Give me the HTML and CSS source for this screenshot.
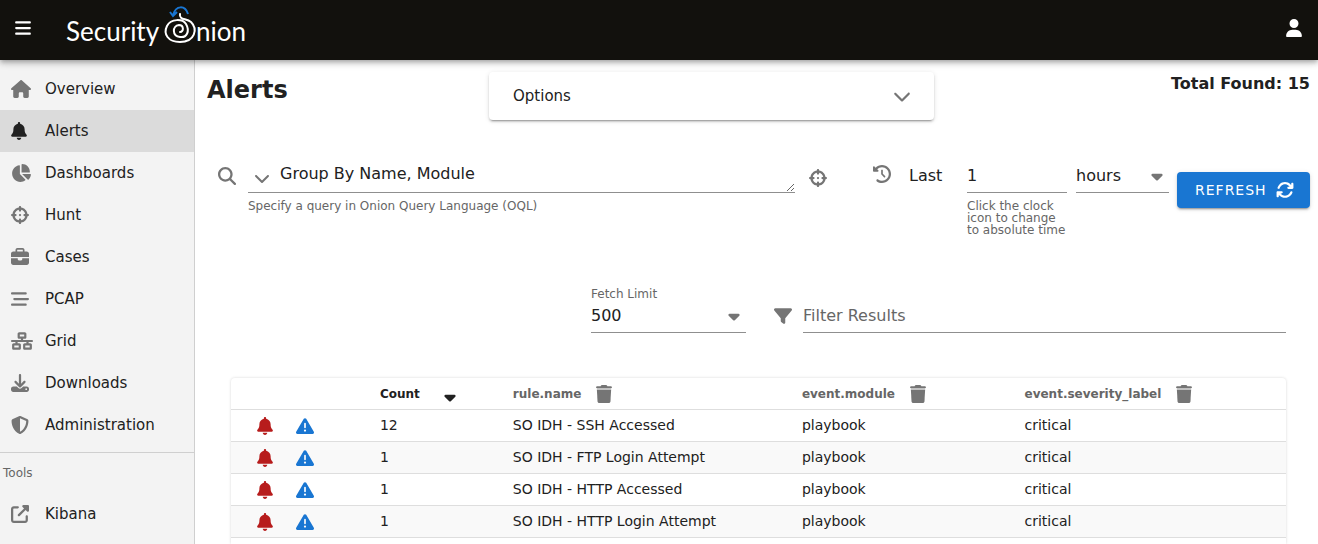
FILE: index.html
```html
<!DOCTYPE html>
<html lang="en">
<head>
<meta charset="utf-8">
<meta name="viewport" content="width=device-width, initial-scale=1">
<title>Security Onion - Alerts</title>
<link rel="stylesheet" href="styles.css">
</head>
<body>
<svg class="sprite" aria-hidden="true">
  <symbol id="i-bars" viewBox="0 0 448 512"><path d="M0 96C0 78.300 14.300 64 32 64H416c17.700 0 32 14.300 32 32s-14.300 32-32 32H32C14.300 128 0 113.700 0 96zM0 256c0-17.700 14.300-32 32-32H416c17.700 0 32 14.300 32 32s-14.300 32-32 32H32c-17.700 0-32-14.300-32-32zM448 416c0 17.700-14.300 32-32 32H32c-17.700 0-32-14.300-32-32s14.300-32 32-32H416c17.700 0 32 14.300 32 32z"/></symbol>
  <symbol id="i-user" viewBox="0 0 448 512"><path d="M224 256A128 128 0 1 0 224 0a128 128 0 1 0 0 256zm-45.700 48C79.800 304 0 383.800 0 482.300C0 498.700 13.300 512 29.700 512H418.300c16.400 0 29.700-13.300 29.700-29.700C448 383.800 368.200 304 269.700 304H178.300z"/></symbol>
  <symbol id="i-house" viewBox="0 0 576 512"><path d="M575.8 255.5c0 18-15 32.1-32 32.1h-32l.7 160.2c0 2.7-.2 5.4-.5 8.1V472c0 22.1-17.9 40-40 40H456c-1.1 0-2.2 0-3.3-.1c-1.4 .1-2.8 .1-4.2 .1H416 392c-22.1 0-40-17.9-40-40V448 384c0-17.7-14.3-32-32-32H256c-17.7 0-32 14.3-32 32v64 24c0 22.1-17.9 40-40 40H160 128.1c-1.5 0-3-.1-4.5-.2c-1.2 .1-2.4 .2-3.6 .2H104c-22.1 0-40-17.9-40-40V360c0-.9 0-1.9 .1-2.8V287.6H32c-18 0-32-14-32-32.100c0-9 3-17 10-24L266.4 8c7-7 15-8 22-8s15 2 21 7L564.8 231.5c8 7 12 15 11 24z"/></symbol>
  <symbol id="i-bell" viewBox="0 0 448 512"><path d="M224 0c-17.7 0-32 14.3-32 32V51.2C119 66 64 130.6 64 208v18.8c0 47-17.3 92.4-48.5 127.6l-7.4 8.3c-8.4 9.4-10.4 22.9-5.3 34.4S19.4 416 32 416H416c12.6 0 24-7.4 29.2-18.9s3.1-25-5.3-34.4l-7.4-8.3C401.3 319.2 384 273.9 384 226.8V208c0-77.4-55-142-128-156.8V32c0-17.7-14.3-32-32-32zm45.3 493.3c12-12 18.7-28.3 18.7-45.3H224 160c0 17 6.7 33.3 18.7 45.3s28.3 18.7 45.3 18.7s33.3-6.7 45.3-18.7z"/></symbol>
  <symbol id="i-pie" viewBox="0 0 576 512"><path d="M304 240V16.6c0-9 7-16.6 16-16.6C443.7 0 544 100.3 544 224c0 9-7.6 16-16.6 16H304zM32 272C32 150.7 122.1 50.3 239 34.3c9.2-1.3 17 6.1 17 15.4V288L412.5 444.5c6.7 6.7 6.2 17.7-1.5 23.1C371.8 495.6 323.8 512 272 512C139.5 512 32 404.6 32 272zm526.4 16c9.3 0 16.6 7.8 15.4 17c-7.7 55.9-34.6 105.6-73.9 142.3c-6 5.6-15.4 5.2-21.2-.7L320 288H558.4z"/></symbol>
  <symbol id="i-crosshairs" viewBox="0 0 512 512"><path d="M256 0c17.7 0 32 14.3 32 32V42.4c93.7 13.9 167.7 88 181.6 181.6H480c17.7 0 32 14.3 32 32s-14.3 32-32 32H469.6c-13.9 93.7-88 167.7-181.6 181.6V480c0 17.7-14.3 32-32 32s-32-14.3-32-32V469.6C130.3 455.7 56.3 381.7 42.4 288H32c-17.7 0-32-14.3-32-32s14.3-32 32-32H42.4C56.3 130.3 130.3 56.3 224 42.4V32c0-17.7 14.3-32 32-32zM107.4 288c12.5 58.3 58.4 104.1 116.6 116.6V384c0-17.7 14.3-32 32-32s32 14.3 32 32v20.6c58.3-12.5 104.1-58.4 116.6-116.6H384c-17.7 0-32-14.3-32-32s14.3-32 32-32h20.6C392.1 165.7 346.3 119.900 288 107.4V128c0 17.7-14.3 32-32 32s-32-14.3-32-32V107.4C165.7 119.9 119.9 165.7 107.4 224H128c17.7 0 32 14.3 32 32s-14.3 32-32 32H107.4zM256 224a32 32 0 1 1 0 64 32 32 0 1 1 0-64z"/></symbol>
  <symbol id="i-briefcase" viewBox="0 0 512 512"><path d="M184 48H328c4.4 0 8 3.6 8 8V96H176V56c0-4.4 3.600-8 8-8zm-56 8V96H64C28.7 96 0 124.7 0 160v96H192 320 512V160c0-35.3-28.7-64-64-64H384V56c0-30.9-25.1-56-56-56H184c-30.9 0-56 25.1-56 56zM512 288H320v32c0 17.7-14.3 32-32 32H224c-17.7 0-32-14.3-32-32V288H0V416c0 35.3 28.7 64 64 64H448c35.3 0 64-28.7 64-64V288z"/></symbol>
  <symbol id="i-staggered" viewBox="0 0 512 512"><path d="M0 96C0 78.3 14.3 64 32 64H416c17.7 0 32 14.3 32 32s-14.3 32-32 32H32C14.3 128 0 113.7 0 96zM64 256c0-17.7 14.3-32 32-32H480c17.7 0 32 14.3 32 32s-14.3 32-32 32H96c-17.7 0-32-14.3-32-32zM448 416c0 17.7-14.3 32-32 32H32c-17.7 0-32-14.3-32-32s14.3-32 32-32H416c17.7 0 32 14.3 32 32z"/></symbol>
  <symbol id="i-network" viewBox="0 0 640 512"><path d="M256 64H384v64H256V64zM240 0c-26.5 0-48 21.5-48 48v96c0 26.5 21.5 48 48 48h48v32H32c-17.7 0-32 14.3-32 32s14.3 32 32 32h96v32H80c-26.5 0-48 21.5-48 48v96c0 26.5 21.5 48 48 48H240c26.5 0 48-21.5 48-48V368c0-26.5-21.5-48-48-48H192V288H448v32H400c-26.5 0-48 21.5-48 48v96c0 26.5 21.5 48 48 48H560c26.5 0 48-21.5 48-48V368c0-26.5-21.5-48-48-48H512V288h96c17.7 0 32-14.3 32-32s-14.3-32-32-32H352V192h48c26.5 0 48-21.5 48-48V48c0-26.5-21.5-48-48-48H240zM96 448V384H224v64H96zm320-64H544v64H416V384z"/></symbol>
  <symbol id="i-download" viewBox="0 0 512 512"><path d="M288 32c0-17.7-14.3-32-32-32s-32 14.3-32 32V274.7l-73.4-73.4c-12.5-12.5-32.8-12.5-45.3 0s-12.5 32.8 0 45.3l128 128c12.5 12.5 32.8 12.5 45.3 0l128-128c12.5-12.5 12.5-32.8 0-45.3s-32.8-12.5-45.3 0L288 274.7V32zM64 352c-35.3 0-64 28.7-64 64v32c0 35.3 28.7 64 64 64H448c35.3 0 64-28.7 64-64V416c0-35.3-28.7-64-64-64H346.5l-45.3 45.3c-25 25-65.5 25-90.5 0L165.5 352H64zm368 56a24 24 0 1 1 0 48 24 24 0 1 1 0-48z"/></symbol>
  <symbol id="i-shield" viewBox="0 0 512 512"><path d="M256 0c4.6 0 9.2 1 13.4 2.9L457.7 82.8c22 9.3 38.4 31 38.3 57.2c-.5 99.2-41.3 280.7-213.6 363.2c-16.7 8-36.1 8-52.8 0C57.3 420.7 16.5 239.2 16 140c-.1-26.2 16.3-47.9 38.3-57.2L242.7 2.9C246.8 1 251.4 0 256 0zm0 66.8V444.8C394 378 431.1 230.1 432 141.4L256 66.8z"/></symbol>
  <symbol id="i-external" viewBox="0 0 512 512"><path d="M352 0c-12.9 0-24.6 7.8-29.6 19.8s-2.2 25.7 6.9 34.9L370.7 96 201.4 265.4c-12.5 12.5-12.5 32.8 0 45.3s32.8 12.5 45.3 0L416 141.3l41.4 41.4c9.2 9.2 22.9 11.9 34.9 6.9s19.8-16.6 19.8-29.6V32c0-17.7-14.3-32-32-32H352zM80 32C35.8 32 0 67.8 0 112V432c0 44.2 35.8 80 80 80H400c44.2 0 80-35.8 80-80V320c0-17.7-14.3-32-32-32s-32 14.3-32 32V432c0 8.800-7.2 16-16 16H80c-8.8 0-16-7.2-16-16V112c0-8.8 7.2-16 16-16H192c17.7 0 32-14.3 32-32s-14.3-32-32-32H80z"/></symbol>
  <symbol id="i-search" viewBox="0 0 512 512"><path d="M416 208c0 45.9-14.9 88.3-40 122.7L502.6 457.4c12.5 12.5 12.5 32.8 0 45.3s-32.8 12.5-45.3 0L330.7 376c-34.4 25.2-76.8 40-122.7 40C93.1 416 0 322.9 0 208S93.1 0 208 0S416 93.1 416 208zM208 352a144 144 0 1 0 0-288 144 144 0 1 0 0 288z"/></symbol>
  <symbol id="i-chevron" viewBox="0 0 512 512"><path d="M233.4 406.6c12.5 12.5 32.8 12.5 45.3 0l192-192c12.5-12.5 12.5-32.8 0-45.3s-32.8-12.5-45.3 0L256 338.7 86.6 169.4c-12.5-12.5-32.8-12.5-45.3 0s-12.5 32.8 0 45.3l192 192z"/></symbol>
  <symbol id="i-history" viewBox="0 0 512 512"><path d="M75 75L41 41C25.9 25.9 0 36.6 0 57.9V168c0 13.3 10.7 24 24 24H134.1c21.4 0 32.1-25.9 17-41l-30.8-30.8C155 85.5 203 64 256 64c106 0 192 86 192 192s-86 192-192 192c-40.8 0-78.6-12.7-109.7-34.4c-14.5-10.1-34.4-6.6-44.6 7.9s-6.6 34.4 7.9 44.6C151.2 495 201.7 512 256 512c141.4 0 256-114.6 256-256S397.4 0 256 0C185.3 0 121.3 28.7 75 75zm181 53c-13.3 0-24 10.7-24 24V256c0 6.4 2.5 12.5 7 17l72 72c9.4 9.4 24.6 9.4 33.9 0s9.4-24.6 0-33.9l-65-65V152c0-13.3-10.7-24-24-24z"/></symbol>
  <symbol id="i-refresh" viewBox="0 0 512 512"><path d="M105.1 202.6c7.7-21.8 20.2-42.3 37.8-59.8c62.5-62.5 163.8-62.5 226.3 0L386.3 160H352c-17.7 0-32 14.3-32 32s14.3 32 32 32H463.900c17.7 0 32-14.3 32-32V80c0-17.7-14.3-32-32-32s-32 14.3-32 32v35.2L414.4 97.6c-87.5-87.5-229.3-87.5-316.8 0C73.2 122 55.6 150.7 44.8 181.4c-5.9 16.7 2.9 34.9 19.5 40.8s34.9-2.9 40.8-19.5zM39 289.3c-5 1.5-9.8 4.2-13.7 8.2c-4 4-6.7 8.8-8.1 14c-.3 1.2-.6 2.5-.8 3.8c-.3 1.7-.4 3.4-.4 5.1V432c0 17.7 14.3 32 32 32s32-14.3 32-32V396.9l17.6 17.5c87.5 87.4 229.3 87.4 316.7 0c24.4-24.4 42.1-53.1 52.9-83.7c5.9-16.7-2.9-34.9-19.5-40.8s-34.9 2.9-40.8 19.5c-7.7 21.8-20.2 42.3-37.8 59.8c-62.5 62.5-163.8 62.5-226.3 0l-.1-.1L125.6 352H160c17.7 0 32-14.3 32-32s-14.3-32-32-32H48.4c-1.6 0-3.2 .1-4.8 .3s-3.1 .5-4.6 1z"/></symbol>
  <symbol id="i-filter" viewBox="0 0 512 512"><path d="M3.9 54.9C10.5 40.9 24.5 32 40 32H472c15.5 0 29.5 8.9 36.1 22.9s4.6 30.5-5.2 42.5L320 320.9V448c0 12.1-6.8 23.2-17.7 28.6s-23.8 4.3-33.5-3l-64-48c-8.1-6-12.8-15.5-12.8-25.6V320.9L9 97.3C-.7 85.4-2.8 68.8 3.9 54.9z"/></symbol>
  <symbol id="i-warning" viewBox="0 0 512 512"><path d="M256 32c14.2 0 27.3 7.5 34.5 19.8l216 368c7.3 12.4 7.3 27.7 .2 40.1S486.3 480 472 480H40c-14.3 0-27.6-7.7-34.7-20.1s-7-27.8 .2-40.1l216-368C228.7 39.5 241.8 32 256 32zm0 128c-13.3 0-24 10.7-24 24V296c0 13.3 10.7 24 24 24s24-10.7 24-24V184c0-13.3-10.7-24-24-24zm32 224a32 32 0 1 0 -64 0 32 32 0 1 0 64 0z"/></symbol>
  <symbol id="i-caret" viewBox="0 0 320 512"><path d="M137.4 374.6c12.5 12.5 32.8 12.5 45.3 0l128-128c9.2-9.2 11.9-22.9 6.9-34.9s-16.6-19.8-29.6-19.8L32 192c-12.9 0-24.6 7.8-29.6 19.8s-2.2 25.7 6.9 34.9l128 128z"/></symbol>
  <symbol id="i-trash" viewBox="0 0 448 512"><path d="M135 18C141 7 152 0 164 0H284c12 0 23 7 29 18L320 32H416c18 0 32 14 32 32v18H0V64C0 46 14 32 32 32H128z"/><path opacity=".45" d="M18 82H430L426 145H22z"/><path d="M22 145H426L408 467c-2 25-23 45-48 45H88c-25 0-46-20-48-45z"/></symbol>
</svg>

<header class="appbar">
  <button class="icon-button" type="button" aria-label="Toggle navigation"><svg class="icon"><use href="#i-bars"/></svg></button>
  <a class="brand" href="#" aria-label="Security Onion">
    <svg class="logo" viewBox="0 0 180 48" role="img">
      <text x="0" y="37">Security</text>
      <path class="logo-line" d="M114 10C113 16 120 14 125 18C132 25 129 38 114 38C102 38 97 30 101 22C105 14 117 15 120 20C124 27 121 34 114 33C106 32 106 22 113 21C118 21 118 28 114 28"/>
      <path class="logo-arrow" d="M122 10C119 1 110 1 107 11M104 8l3 4l4-4"/>
      <text x="130" y="37">nion</text>
    </svg>
  </a>
  <button class="icon-button user" type="button" aria-label="User menu"><svg class="icon"><use href="#i-user"/></svg></button>
</header>

<div class="shell">
  <nav class="sidebar" aria-label="Main">
    <ul class="nav-list">
      <li><a class="nav-item" href="#"><span class="nav-icon"><svg class="icon w20"><use href="#i-house"/></svg></span>Overview</a></li>
      <li><a class="nav-item active" href="#" aria-current="page"><span class="nav-icon"><svg class="icon w16"><use href="#i-bell"/></svg></span>Alerts</a></li>
      <li><a class="nav-item" href="#"><span class="nav-icon"><svg class="icon w20"><use href="#i-pie"/></svg></span>Dashboards</a></li>
      <li><a class="nav-item" href="#"><span class="nav-icon"><svg class="icon"><use href="#i-crosshairs"/></svg></span>Hunt</a></li>
      <li><a class="nav-item" href="#"><span class="nav-icon"><svg class="icon"><use href="#i-briefcase"/></svg></span>Cases</a></li>
      <li><a class="nav-item" href="#"><span class="nav-icon"><svg class="icon"><use href="#i-staggered"/></svg></span>PCAP</a></li>
      <li><a class="nav-item" href="#"><span class="nav-icon"><svg class="icon w22"><use href="#i-network"/></svg></span>Grid</a></li>
      <li><a class="nav-item" href="#"><span class="nav-icon"><svg class="icon"><use href="#i-download"/></svg></span>Downloads</a></li>
      <li><a class="nav-item" href="#"><span class="nav-icon"><svg class="icon"><use href="#i-shield"/></svg></span>Administration</a></li>
    </ul>
    <h2 class="nav-heading">Tools</h2>
    <ul class="nav-list">
      <li><a class="nav-item" href="#"><span class="nav-icon"><svg class="icon"><use href="#i-external"/></svg></span>Kibana</a></li>
    </ul>
  </nav>

  <main class="content">
    <div class="title-row">
      <h1 class="title">Alerts</h1>
      <button class="options" type="button" aria-expanded="false">Options<svg class="icon"><use href="#i-chevron"/></svg></button>
      <p class="total">Total Found: 15</p>
    </div>

    <form class="search-row">
      <span class="lead-icon"><svg class="icon"><use href="#i-search"/></svg></span>
      <div class="query">
        <div class="query-box">
          <button class="query-menu" type="button" aria-label="Saved queries"><svg class="icon small"><use href="#i-chevron"/></svg></button>
          <textarea id="query" class="query-input" rows="1" aria-label="Query" aria-describedby="query-hint">Group By Name, Module</textarea>
        </div>
        <p class="hint" id="query-hint">Specify a query in Onion Query Language (OQL)</p>
      </div>
      <button class="icon-button hunt" type="button" aria-label="Hunt with this query"><svg class="icon"><use href="#i-crosshairs"/></svg></button>
      <div class="time">
        <button class="icon-button clock" type="button" aria-label="Switch to absolute time"><svg class="icon"><use href="#i-history"/></svg></button>
        <label class="last" for="duration">Last</label>
        <div class="duration">
          <input id="duration" class="field" type="text" value="1" aria-describedby="duration-hint">
          <p class="hint" id="duration-hint">Click the clock icon to change to absolute time</p>
        </div>
        <div class="select units">
          <select class="field" aria-label="Time units"><option>hours</option></select>
          <svg class="icon caret"><use href="#i-caret"/></svg>
        </div>
        <button class="refresh" type="button">REFRESH<svg class="icon"><use href="#i-refresh"/></svg></button>
      </div>
    </form>

    <div class="filter-row">
      <div class="fetch">
        <label class="label" for="limit">Fetch Limit</label>
        <div class="select">
          <select id="limit" class="field"><option>500</option></select>
          <svg class="icon caret"><use href="#i-caret"/></svg>
        </div>
      </div>
      <div class="filter">
        <span class="lead-icon"><svg class="icon"><use href="#i-filter"/></svg></span>
        <input class="field" type="text" placeholder="Filter Results" aria-label="Filter Results">
      </div>
    </div>

    <div class="card">
      <table class="results">
        <colgroup><col class="c-actions"><col class="c-count"><col class="c-name"><col class="c-module"><col class="c-severity"></colgroup>
        <thead>
          <tr>
            <td></td>
            <th scope="col" class="sorted" aria-sort="descending"><span class="th">Count<svg class="icon caret-sort"><use href="#i-caret"/></svg></span></th>
            <th scope="col"><span class="th">rule.name<button class="icon-button" type="button" aria-label="Remove rule.name"><svg class="icon w16"><use href="#i-trash"/></svg></button></span></th>
            <th scope="col"><span class="th">event.module<button class="icon-button" type="button" aria-label="Remove event.module"><svg class="icon w16"><use href="#i-trash"/></svg></button></span></th>
            <th scope="col"><span class="th">event.severity_label<button class="icon-button" type="button" aria-label="Remove event.severity_label"><svg class="icon w16"><use href="#i-trash"/></svg></button></span></th>
          </tr>
        </thead>
        <tbody>
          <tr>
            <td class="actions"><div class="action-set"><button class="icon-button ack" type="button" aria-label="Acknowledge"><svg class="icon w16"><use href="#i-bell"/></svg></button><button class="icon-button escalate" type="button" aria-label="Escalate"><svg class="icon"><use href="#i-warning"/></svg></button></div></td>
            <td>12</td><td>SO IDH - SSH Accessed</td><td>playbook</td><td>critical</td>
          </tr>
          <tr>
            <td class="actions"><div class="action-set"><button class="icon-button ack" type="button" aria-label="Acknowledge"><svg class="icon w16"><use href="#i-bell"/></svg></button><button class="icon-button escalate" type="button" aria-label="Escalate"><svg class="icon"><use href="#i-warning"/></svg></button></div></td>
            <td>1</td><td>SO IDH - FTP Login Attempt</td><td>playbook</td><td>critical</td>
          </tr>
          <tr>
            <td class="actions"><div class="action-set"><button class="icon-button ack" type="button" aria-label="Acknowledge"><svg class="icon w16"><use href="#i-bell"/></svg></button><button class="icon-button escalate" type="button" aria-label="Escalate"><svg class="icon"><use href="#i-warning"/></svg></button></div></td>
            <td>1</td><td>SO IDH - HTTP Accessed</td><td>playbook</td><td>critical</td>
          </tr>
          <tr>
            <td class="actions"><div class="action-set"><button class="icon-button ack" type="button" aria-label="Acknowledge"><svg class="icon w16"><use href="#i-bell"/></svg></button><button class="icon-button escalate" type="button" aria-label="Escalate"><svg class="icon"><use href="#i-warning"/></svg></button></div></td>
            <td>1</td><td>SO IDH - HTTP Login Attempt</td><td>playbook</td><td>critical</td>
          </tr>
        </tbody>
      </table>
    </div>
  </main>
</div>
</body>
</html>
```
FILE: styles.css
```css
:root {
  --ink: #212121;
  --muted: #666;
  --icon: #757575;
  --rule: #dedede;
  --underline: #8f8f8f;
  --primary: #1976d2;
}

* { box-sizing: border-box; }

body {
  display: flex;
  flex-direction: column;
  min-height: 100vh;
  margin: 0;
  color: var(--ink);
  background: #fff;
  font-family: "DejaVu Sans", sans-serif;
  font-size: 16px;
}

button, input, select, textarea { font: inherit; color: inherit; }
h1, h2, p, ul { margin: 0; padding: 0; }

.sprite { position: absolute; width: 0; height: 0; }

.icon { display: block; flex: none; width: 18px; height: 18px; fill: currentColor; }
.icon.w16 { width: 16px; }
.icon.w20 { width: 20px; }
.icon.w22 { width: 22px; }
.icon.small { width: 16px; height: 16px; }

.icon-button {
  display: flex;
  flex: none;
  align-items: center;
  padding: 0;
  border: 0;
  background: none;
  color: var(--icon);
  cursor: pointer;
}

/* App bar */
.appbar {
  position: relative;
  z-index: 2;
  display: flex;
  align-items: center;
  height: 60px;
  padding: 0 15px 4px 14px;
  background: #12110d;
  box-shadow: 0 2px 4px -1px rgba(0, 0, 0, .2), 0 4px 5px rgba(0, 0, 0, .14), 0 1px 10px rgba(0, 0, 0, .12);
}
.appbar .icon-button { color: #fff; }
.appbar .user { margin-left: auto; }
.brand { margin-left: 34px; }
.logo { display: block; width: 180px; height: 48px; overflow: visible; }
.logo text { fill: #fff; font-family: Lato, sans-serif; font-size: 26px; }
.logo-line { fill: none; stroke: #fff; stroke-width: 2; stroke-linecap: round; }
.logo-arrow { fill: none; stroke: var(--primary); stroke-width: 2; }

/* Sidebar */
.shell { display: flex; flex: 1; }
.sidebar {
  flex: none;
  width: 195px;
  padding-top: 8px;
  border-right: 1px solid #cfcfcf;
  background: #f3f3f3;
}
.nav-list { list-style: none; }
.nav-item {
  display: flex;
  align-items: center;
  height: 42px;
  padding-left: 11px;
  color: var(--ink);
  font-size: 15px;
  text-decoration: none;
}
.nav-item.active { background: #dbdbdb; }
.nav-icon { width: 34px; color: var(--icon); }
.active .nav-icon { color: var(--ink); }
.nav-heading {
  margin-top: 6px;
  padding-left: 3px;
  border-top: 1px solid #cfcfcf;
  color: var(--muted);
  font-size: 12px;
  font-weight: 400;
  line-height: 40px;
}

/* Content */
.content {
  display: flex;
  flex: 1;
  flex-direction: column;
  min-width: 0;
  padding: 12px 8px 0 12px;
}

.title-row {
  display: grid;
  grid-template-columns: 282fr 445fr 376fr;
  align-items: start;
}
.title { font-size: 24px; line-height: 36px; }
.total { font-weight: 700; line-height: 24px; text-align: right; }
.options {
  display: flex;
  align-items: center;
  justify-content: space-between;
  height: 48px;
  padding: 0 23px 0 24px;
  border: 0;
  border-radius: 4px;
  background: #fff;
  box-shadow: 0 3px 1px -2px rgba(0, 0, 0, .2), 0 2px 2px rgba(0, 0, 0, .14), 0 1px 5px rgba(0, 0, 0, .12);
  font-size: 15px;
}
.options .icon { color: var(--icon); }

.field {
  display: block;
  width: 100%;
  height: 33px;
  padding: 0 0 2px;
  border: 0;
  border-bottom: 1px solid var(--underline);
  border-radius: 0;
  outline: 0;
  background: none;
}
.field::placeholder { color: var(--muted); opacity: 1; }

.hint { margin-top: 7px; color: var(--muted); font-size: 12px; line-height: 12px; }

.select { position: relative; }
.select .field { appearance: none; }
.caret {
  position: absolute;
  top: 7px;
  right: 6px;
  width: 12px;
  color: var(--icon);
  pointer-events: none;
}

.lead-icon { display: flex; flex: none; align-items: center; height: 32px; color: var(--icon); }

.search-row {
  display: flex;
  align-items: flex-start;
  margin-top: 40px;
  padding-left: 11px;
}
.query { flex: 1; min-width: 0; margin-left: 12px; }
.query-box { display: flex; border-bottom: 1px solid var(--underline); }
.query-menu {
  display: flex;
  align-items: center;
  height: 32px;
  padding: 4px 10px 0 6px;
  border: 0;
  background: none;
  color: var(--icon);
}
.query-input {
  flex: 1;
  min-width: 0;
  height: 32px;
  padding: 2px 0;
  border: 0;
  outline: 0;
  background: none;
  line-height: 24px;
  overflow: hidden;
  resize: vertical;
}
.hunt { height: 36px; margin-left: 14px; }
.time { display: flex; flex: none; align-items: flex-start; margin-left: 46px; }
.clock { height: 28px; }
.last { width: 58px; margin-left: 18px; line-height: 32px; }
.duration { width: 100px; }
.units { width: 93px; margin: 0 8px 0 9px; }
.refresh {
  display: flex;
  align-items: center;
  justify-content: space-between;
  width: 133px;
  height: 36px;
  margin-top: 12px;
  padding: 0 16px 0 18px;
  border: 0;
  border-radius: 4px;
  background: var(--primary);
  box-shadow: 0 3px 1px -2px rgba(0, 0, 0, .2), 0 2px 2px rgba(0, 0, 0, .14), 0 1px 5px rgba(0, 0, 0, .12);
  color: #fff;
  font-size: 14px;
  letter-spacing: 1px;
}

.filter-row {
  display: grid;
  grid-template-columns: 384fr 155fr 540fr;
  align-items: end;
  margin: 52px 24px 0 0;
}
.fetch { grid-column: 2; }
.label { display: block; color: var(--muted); font-size: 12px; line-height: 12px; }
.filter { display: flex; margin-left: 28px; }
.filter .lead-icon { margin-right: 11px; }

/* Results */
.card {
  flex: 1;
  margin: 45px 24px 0;
  border-radius: 4px 4px 0 0;
  box-shadow: 0 0 3px rgba(0, 0, 0, .16);
}
.results { width: 100%; border-collapse: separate; border-spacing: 0; table-layout: fixed; font-size: 14px; }
.c-actions, .c-count { width: 12.6%; }
.c-name { width: 27.4%; }
.c-module { width: 21.1%; }
.results th, .results td {
  height: 32px;
  padding: 0 16px;
  border-bottom: 1px solid var(--rule);
  text-align: left;
}
.results tbody td { padding-bottom: 2px; }
.results th { color: var(--muted); font-size: 12px; }
.results .sorted { color: var(--ink); }
.th { display: flex; align-items: center; }
.th .icon-button { margin-left: 15px; }
.caret-sort { width: 12px; height: 18px; margin: 6px 0 0 24px; }
.results tbody tr:nth-child(even) { background: #f9f9f9; }
.results tbody .actions { padding: 0 0 0 26px; }
.action-set { display: flex; gap: 23px; }
.ack { color: #b71c1c; }
.escalate { color: var(--primary); }
```
